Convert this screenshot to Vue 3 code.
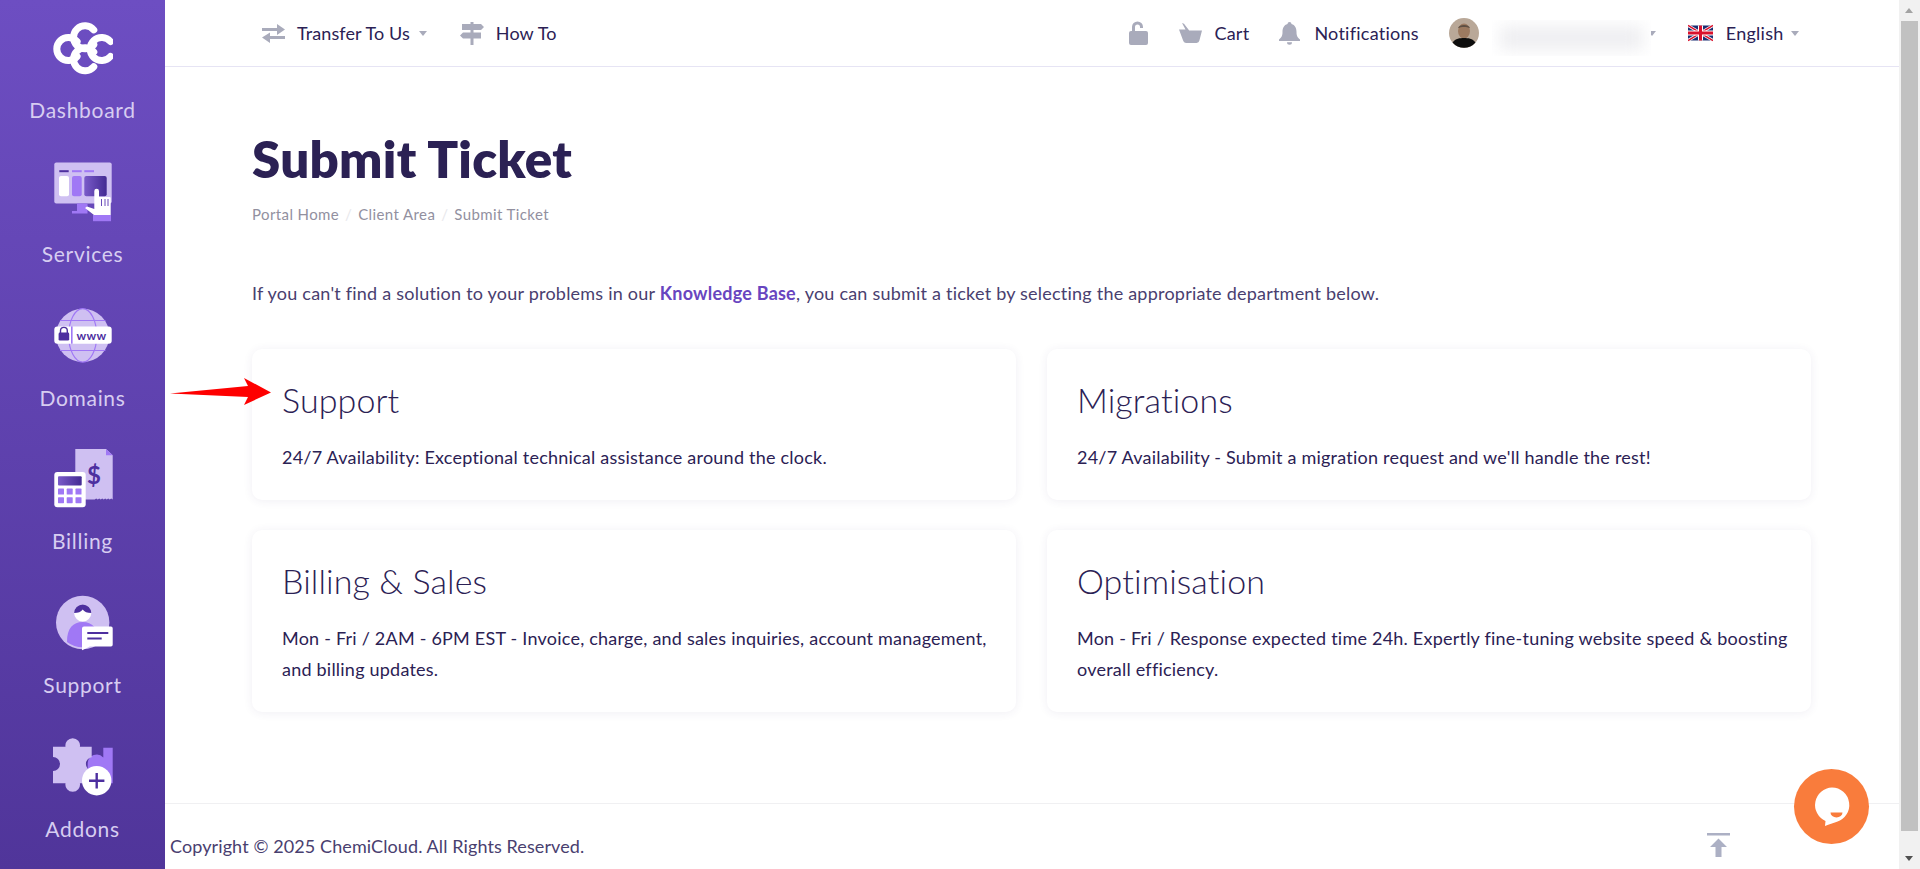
<script setup>
const cards = [
  { title: 'Support', text: '24/7 Availability: Exceptional technical assistance around the clock.' },
  { title: 'Migrations', text: "24/7 Availability - Submit a migration request and we'll handle the rest!" },
  { title: 'Billing & Sales', text: 'Mon - Fri / 2AM - 6PM EST - Invoice, charge, and sales inquiries, account management, and billing updates.' },
  { title: 'Optimisation', text: 'Mon - Fri / Response expected time 24h. Expertly fine-tuning website speed & boosting overall efficiency.' },
]
</script>

<template>
  <div class="page">
    <!-- left navigation -->
    <aside class="sidebar">
      <a class="nav-item">
        <svg class="nav-icon" viewBox="0 0 60 60">
          <g fill="none" stroke="#fff" stroke-width="7" stroke-linecap="round">
            <path d="M24.100 23.600A11.500 11.500 0 1 0 24.100 38.400" />
            <path d="M40.800 11.900A11.500 11.500 0 1 0 40.800 26.700" />
            <path d="M40.800 33.900A11.500 11.500 0 1 0 40.800 48.700" />
            <path d="M57.500 23.600A11.500 11.500 0 1 0 57.500 38.400" />
          </g>
        </svg>
        <span>Dashboard</span>
      </a>
      <a class="nav-item">
        <svg class="nav-icon" viewBox="0 0 60 60">
          <defs>
            <linearGradient id="dk" x1="0" y1="0" x2="1" y2="0">
              <stop offset="0" stop-color="#7a5bc9" />
              <stop offset="1" stop-color="#432a93" />
            </linearGradient>
          </defs>
          <rect x="1.3" y="0.5" width="57.4" height="41" rx="2" fill="#cfc0f2" />
          <rect x="6.3" y="8.2" width="9.4" height="2" fill="#4d2f9f" />
          <rect x="19" y="8.2" width="9.7" height="2" fill="#a078f5" />
          <rect x="31.3" y="8.2" width="9.7" height="2" fill="#a078f5" />
          <rect x="6" y="14" width="10" height="20.2" rx="2" fill="#fff" />
          <rect x="19" y="14" width="9.7" height="20.2" rx="2" fill="#a078f5" />
          <rect x="31.3" y="14" width="22.4" height="20.2" rx="2" fill="url(#dk)" />
          <path d="M24 41.5h10.5v10H19v-2.5h5z" fill="#a078f5" />
          <rect x="40" y="53" width="18" height="6.2" fill="#a078f5" />
          <path d="M41.3 29a2.35 2.35 0 0 1 4.7 0v6h10.5a1.3 1.3 0 0 1 1.2 1.3V53H41l-9-7 2-1.6 7.3 2.6z" fill="#fff" />
          <path d="M48.5 37v7M52 37v7M55 37v7" stroke="#6b4dbb" stroke-width="1" fill="none" />
        </svg>
        <span>Services</span>
      </a>
      <a class="nav-item">
        <svg class="nav-icon" viewBox="0 0 60 60">
          <circle cx="29.7" cy="29.4" r="26.7" fill="#cfc0f2" />
          <g fill="none" stroke="#a078f5" stroke-width="1.2">
            <ellipse cx="29.7" cy="29.4" rx="14" ry="26.7" />
            <path d="M7 14.5h45.4M7 44.5h45.4" />
          </g>
          <rect x="1.3" y="20.4" width="57.4" height="17.3" rx="3" fill="#fff" />
          <rect x="18" y="20.4" width="1.6" height="17.3" fill="#a078f5" />
          <path d="M7.5 27v-2.2a3.4 3.4 0 0 1 6.8 0V27" fill="none" stroke="#4d2f9f" stroke-width="1.4" />
          <rect x="5.6" y="26.6" width="10.6" height="8" rx="1.3" fill="#4d2f9f" />
          <text x="38.5" y="34" text-anchor="middle" class="www">www</text>
        </svg>
        <span>Domains</span>
      </a>
      <a class="nav-item">
        <svg class="nav-icon" viewBox="0 0 60 60">
          <path d="M22.3 0H53l6.7 6.3v44.3l-1.5-1.2-1.5 1.2-1.5-1.2-1.5 1.2-1.5-1.2-1.5 1.2-1.5-1.2-1.5 1.2-1.5-1.2-1.5 1.2-1.5-1.2-1.5 1.2H22.3z" fill="#cfc0f2" />
          <path d="M53 0l6.7 6.3H53z" fill="#a078f5" />
          <text x="41.3" y="35" text-anchor="middle" class="dollar">$</text>
          <rect x="1.3" y="22.9" width="31.4" height="35.4" rx="3" fill="#fff" />
          <rect x="5" y="27.3" width="23.7" height="9.3" rx="1" fill="url(#dk)" />
          <g fill="#a078f5">
            <rect x="5" y="39.6" width="6" height="6" rx="0.6" />
            <rect x="13.7" y="39.6" width="6" height="6" rx="0.6" />
            <rect x="22.5" y="39.6" width="6" height="6" rx="0.6" />
            <rect x="5" y="48.2" width="6" height="6" rx="0.6" />
            <rect x="13.7" y="48.2" width="6" height="6" rx="0.6" />
            <rect x="22.5" y="48.2" width="6" height="6" rx="0.6" />
          </g>
        </svg>
        <span>Billing</span>
      </a>
      <a class="nav-item">
        <svg class="nav-icon" viewBox="0 0 60 60">
          <circle cx="29.7" cy="29.5" r="26.7" fill="#cfc0f2" />
          <path d="M14 49c0-14 6-20 15.700-20s15.700 6 15.700 20a26 26 0 0 1-31.400 0z" fill="#a078f5" />
          <circle cx="29.700" cy="20" r="8.600" fill="#fff" />
          <path d="M21.100 20a8.600 8.600 0 0 1 17.200 0c-4 0-7-1-8.600-3.500-1.600 2.500-4.600 3.500-8.600 3.500z" fill="#4d2f9f" />
          <path d="M31 33.500h27a1.700 1.700 0 0 1 1.700 1.700v16.600a1.700 1.700 0 0 1-1.700 1.700H37l-8 3.700V35.500a2 2 0 0 1 2-2z" fill="#fff" />
          <path d="M34.300 40h21M34.300 45.500h14.400" stroke="#4d2f9f" stroke-width="2" fill="none" />
        </svg>
        <span>Support</span>
      </a>
      <a class="nav-item">
        <svg class="nav-icon" viewBox="0 0 60 60">
          <path d="M50.300 10.700h9.400v35.600h-25V26a9 9 0 0 1 15.600-5.500z" fill="#a078f5" />
          <path d="M0 9.700h12.500a7.300 7.300 0 1 1 14.400 0h11.800v10.500a7 7 0 0 0 0 13.800v12.300H26.900a7.300 7.300 0 1 1-14.400 0H0V34a7 7 0 1 0 0-14z" fill="#cfc0f2" />
          <circle cx="43.700" cy="43.700" r="14.700" fill="#fff" />
          <path d="M43.700 36v15.400M36 43.700h15.400" stroke="#4d2f9f" stroke-width="2.400" fill="none" />
        </svg>
        <span>Addons</span>
      </a>
    </aside>

    <div class="main">
      <!-- top bar -->
      <header class="topbar">
        <div class="top-left">
          <a class="top-link">
            <svg class="ico" width="23" height="19" viewBox="0 0 23 19"><path d="M0 4h15V0l8 5.500-8 5.500V7H0zM23 12H8V8.500L0 13.500 8 19v-4h15z" /></svg>
            <span>Transfer To Us</span>
            <i class="caret"></i>
          </a>
          <a class="top-link howto">
            <svg class="ico" width="24" height="23" viewBox="0 0 24 23"><path d="M10.500 0h3v2H21l3 3-3 3H13.500v2.500H21v6h-7.500V23h-3v-6.500H3l-3-3 3-3h7.500V8H2V2h8.500z" /></svg>
            <span>How To</span>
          </a>
        </div>
        <div class="top-right">
          <svg class="ico lock" width="19" height="24" viewBox="0 0 19 24"><path d="M3 10V6a5.500 5.500 0 0 1 11 0v1h-3V6a2.500 2.500 0 0 0-5 0v4h11a2 2 0 0 1 2 2v10a2 2 0 0 1-2 2H2a2 2 0 0 1-2-2V12a2 2 0 0 1 2-2z" /></svg>
          <a class="top-link cart">
            <svg class="ico" width="23" height="20" viewBox="0 0 23 20"><path d="M3 0l2 .8 5.200 6.700H23l-2.600 10.100a3 3 0 0 1-2.900 2.400H7a3 3 0 0 1-2.900-2.400L0 6.500h6.500z" /></svg>
            <span>Cart</span>
          </a>
          <a class="top-link notif">
            <svg class="ico" width="21" height="23" viewBox="0 0 21 23"><path d="M10.500 0a2 2 0 0 1 2 2c3.500 1 5 4 5 8 0 4 1 5.500 3.500 7.500v1.500H0v-1.500C2.500 15.500 3.500 14 3.500 10c0-4 1.500-7 5-8a2 2 0 0 1 2-2zM8 20.200h5a2.500 2.500 0 0 1-5 0z" /></svg>
            <span>Notifications</span>
          </a>
          <div class="account">
            <svg class="avatar" viewBox="0 0 30 30">
              <circle cx="15" cy="15" r="15" fill="#b9a898" />
              <ellipse cx="15" cy="13" rx="6" ry="7.500" fill="#9c7a60" />
              <path d="M9 10c1-4 11-4 12 0-3-1.500-9-1.500-12 0z" fill="#5e4f43" />
              <path d="M3.500 24.500c3-4 7.500-4.500 11.500-4.500s8.500.5 11.500 4.500A15 15 0 0 1 3.500 24.500z" fill="#0d0d0d" />
            </svg>
            <i class="caret under"></i>
            <div class="blur-mask"><div class="blur-blob"></div></div>
          </div>
          <a class="top-link lang">
            <svg class="flag" width="25" height="18" viewBox="0 0 50 30">
              <rect width="50" height="30" fill="#1a2f72" />
              <path d="M0 0l50 30M50 0L0 30" stroke="#fff" stroke-width="6" />
              <path d="M0 0l50 30M50 0L0 30" stroke="#d9102b" stroke-width="3" />
              <path d="M25 0v30M0 15h50" stroke="#fff" stroke-width="10" />
              <path d="M25 0v30M0 15h50" stroke="#d9102b" stroke-width="6" />
            </svg>
            <span>English</span>
            <i class="caret"></i>
          </a>
        </div>
      </header>

      <main class="content">
        <h1>Submit Ticket</h1>
        <nav class="crumbs">
          <a>Portal Home</a><i>/</i><a>Client Area</a><i>/</i><a>Submit Ticket</a>
        </nav>
        <p class="intro">
          If you can't find a solution to your problems in our <a>Knowledge Base</a>, you can submit a ticket by selecting the appropriate department below.
        </p>
        <div class="cards">
          <div v-for="card in cards" :key="card.title" class="card">
            <h2>{{ card.title }}</h2>
            <p>{{ card.text }}</p>
          </div>
        </div>
      </main>

      <footer class="footer">
        <span>Copyright © 2025 ChemiCloud. All Rights Reserved.</span>
        <svg class="to-top" width="23" height="24" viewBox="0 0 23 24"><path d="M0 0h23v2.500H0zM11.500 5.500L20 14h-5.500v10h-6V14H3z" /></svg>
      </footer>

      <!-- red annotation arrow over the first card -->
      <svg class="arrow" width="103" height="29" viewBox="0 0 103 29">
        <path d="M0 15.500L78 8 74 0l27 14.500L74 27l4-8z" fill="#fe0000" />
      </svg>
      <button class="chat">
        <svg width="40" height="42" viewBox="0 0 40 42">
          <path d="M20 1.500a17.500 17.500 0 0 1 5 34.200c-4 1.300-7.500 2.600-12 4.300l.5-5A17.500 17.500 0 0 1 20 1.500z" fill="#fff" />
          <path d="M18.500 26.500h12a6 5 0 0 1-12 0z" fill="#f97c3c" />
        </svg>
      </button>
    </div>

    <!-- browser scrollbar -->
    <div class="scrollbar">
      <i class="sb-up"></i>
      <div class="sb-thumb"></div>
      <i class="sb-down"></i>
    </div>
  </div>
</template>

<style>
html, body {
  margin: 0;
  overflow: hidden;
}
</style>

<style scoped>
.page {
  display: flex;
  height: 100vh;
  overflow: hidden;
  background: #fff;
  font-family: Lato, "Noto Sans", sans-serif;
  color: #2b2154;
}

.sidebar {
  width: 165px;
  flex: none;
  background: linear-gradient(180deg, #6d4ec2 0%, #50359a 100%);
  color: #d7cdf1;
}

.nav-item {
  display: flex;
  flex-direction: column;
  align-items: center;
  height: 143.8px;
  padding-top: 18px;
  box-sizing: border-box;
  font-size: 21px;
  line-height: 22px;
  letter-spacing: 0.7px;
}

.nav-icon {
  width: 60px;
  height: 60px;
  margin-bottom: 21px;
}

.www {
  font: 700 12px Lato, sans-serif;
  fill: #4d2f9f;
  letter-spacing: 0.3px;
}

.dollar {
  font: 700 24px Lato, sans-serif;
  fill: #4d2f9f;
}

.main {
  position: relative;
  flex: 1;
  min-width: 0;
  display: flex;
  flex-direction: column;
}

.topbar {
  display: flex;
  justify-content: space-between;
  align-items: center;
  height: 66px;
  flex: none;
  padding: 0 100.500px 0 97px;
  border-bottom: 1px solid #e6e4f4;
  font-size: 18px;
  letter-spacing: 0.25px;
}

.top-left,
.top-right,
.top-link {
  display: flex;
  align-items: center;
}

.top-left {
  letter-spacing: 0.1px;
}

.ico {
  fill: #a9abbb;
  flex: none;
}

.top-link .ico {
  margin-right: 12px;
}

.top-link.notif .ico {
  margin-right: 14px;
}

.howto {
  margin-left: 33px;
}

.cart {
  margin-left: 31px;
}

.notif {
  margin-left: 30px;
}

.caret {
  width: 0;
  height: 0;
  margin-left: 9px;
  border-left: 4px solid transparent;
  border-right: 4px solid transparent;
  border-top: 5px solid #a9abbb;
}

.lang .caret {
  margin-left: 7px;
}

.account {
  position: relative;
  display: flex;
  align-items: center;
  width: 203px;
  margin-left: 30px;
}

.avatar {
  width: 30px;
  height: 30px;
}

.caret.under {
  position: absolute;
  left: 199px;
  margin: 0;
}

.blur-mask {
  position: absolute;
  left: 43px;
  top: 2px;
  width: 159px;
  height: 36px;
  overflow: hidden;
  background: #fff;
}

.blur-blob {
  height: 24px;
  margin: 6px 8px;
  background: #eeeef1;
  filter: blur(8px);
}

.lang {
  margin-left: 36px;
}

.flag {
  margin-right: 13px;
}

.content {
  flex: 1;
  padding: 61px 88px 0 87px;
}

h1 {
  margin: 0;
  font-size: 51px;
  line-height: 62px;
  font-weight: 800;
  letter-spacing: 0.3px;
  color: #2b2154;
}

.crumbs {
  display: flex;
  margin-top: 14px;
  font-size: 15px;
  line-height: 20px;
  letter-spacing: 0.4px;
  color: #92909f;
}

.crumbs i {
  width: 19px;
  text-align: center;
  font-style: normal;
  color: #e8e8ec;
}

.intro {
  margin: 55px 0 0;
  font-size: 18px;
  line-height: 28px;
  letter-spacing: 0.22px;
  color: #49406f;
}

.intro a {
  font-weight: 700;
  color: #6845c0;
}

.cards {
  display: grid;
  grid-template-columns: repeat(2, 1fr);
  gap: 30px 31px;
  margin-top: 42px;
}

.card {
  padding: 31px 10px 27.5px 30px;
  background: #fff;
  border-radius: 10px;
  box-shadow: 0 1px 10px rgba(60, 50, 110, 0.08);
}

.card h2 {
  margin: 0;
  font-size: 34px;
  line-height: 40px;
  font-weight: 300;
  letter-spacing: 0.1px;
  color: #2b2154;
}

.card p {
  margin: 21.5px 0 0;
  font-size: 18px;
  line-height: 31px;
  letter-spacing: 0.22px;
  color: #2b2154;
}

.footer {
  position: relative;
  flex: none;
  height: 66px;
  padding: 18px 0 0 5px;
  box-sizing: border-box;
  display: flex;
  align-items: center;
  justify-content: flex-start;
  border-top: 1px solid #f0f0f2;
  font-size: 18px;
  letter-spacing: 0.1px;
  color: #49406f;
}

.to-top {
  position: absolute;
  left: 1542px;
  top: 29px;
  fill: #acb0c4;
}

.arrow {
  position: absolute;
  left: 5px;
  top: 378px;
}

.chat {
  position: absolute;
  left: 1629px;
  top: 769px;
  width: 75px;
  height: 75px;
  padding: 0;
  border: 0;
  border-radius: 50%;
  background: #f97c3c;
  display: flex;
  align-items: center;
  justify-content: center;
}

.scrollbar {
  position: relative;
  flex: none;
  width: 21px;
  background: #f1f1f1;
}

.sb-thumb {
  position: absolute;
  left: 2px;
  right: 2px;
  top: 21px;
  height: 810px;
  background: #c1c1c1;
}

.sb-up,
.sb-down {
  position: absolute;
  left: 6px;
  width: 0;
  height: 0;
  border-left: 4.5px solid transparent;
  border-right: 4.5px solid transparent;
}

.sb-up {
  top: 8px;
  border-bottom: 5px solid #a3a3a3;
}

.sb-down {
  bottom: 8px;
  border-top: 5px solid #505050;
}
</style>
